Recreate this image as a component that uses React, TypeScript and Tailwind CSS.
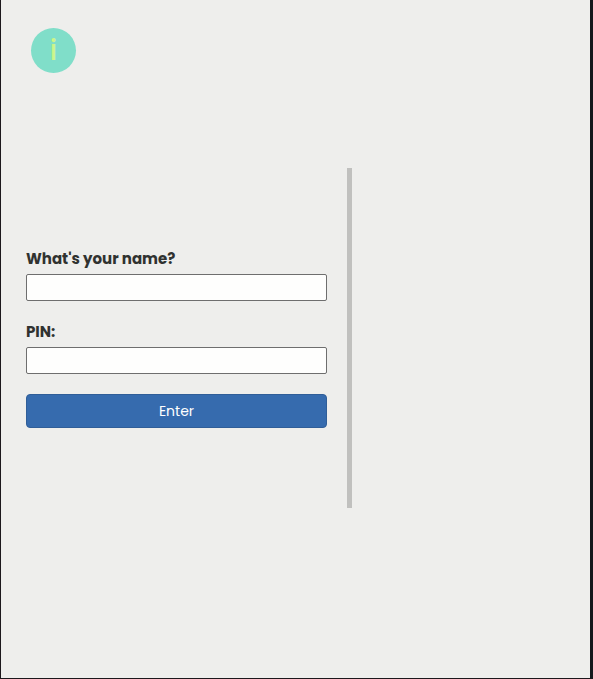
export default function App() {
  return (
    <main className="flex h-[679px] w-[593px] flex-col border-b border-l border-r-[3px] border-b-[#1c181c] border-l-[#1c181c] border-r-[#14181c] bg-[#eeeeec] font-['Poppins','Inter','Liberation_Sans',sans-serif] text-[#303230]">
      <header className="h-[168px] shrink-0 pl-[30px] pt-7">
        <div className="flex size-[45px] items-center justify-center rounded-full bg-[#80dec9]">
          <span className="text-[28px] font-medium leading-[45px] text-[#cdf58b]">i</span>
        </div>
      </header>
      <section className="flex h-[340px] w-[351px] items-center border-r-[5px] border-[#c0c0be] pl-[25px] pr-5">
        <form className="flex w-full flex-col" onSubmit={(e) => e.preventDefault()}>
          <label htmlFor="name" className="h-[26px] text-[15px] font-bold leading-[21px]">What's your name?</label>
          <input id="name" className="h-[27px] w-full rounded-[2px] border border-[#6e6e6e] bg-[#fefefd]" />
          <label htmlFor="pin" className="mt-5 h-[26px] text-[15px] font-bold leading-[21px]">PIN:</label>
          <input id="pin" type="password" className="h-[27px] w-full rounded-[2px] border border-[#6e6e6e] bg-[#fefefd]" />
          <button className="mt-5 h-[34px] w-full rounded border border-[#305e98] bg-[#366bae] text-sm text-white">Enter</button>
        </form>
      </section>
    </main>
  );
}
